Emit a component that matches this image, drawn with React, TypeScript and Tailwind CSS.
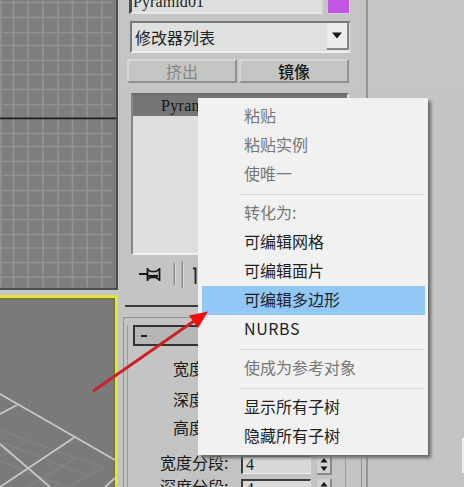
import clsx from 'clsx';

type MenuEntry = { label: string; disabled?: boolean; active?: boolean } | null;

// null draws a separator
const menu: MenuEntry[] = [
  { label: '粘贴', disabled: true },
  { label: '粘贴实例', disabled: true },
  { label: '使唯一', disabled: true },
  null,
  { label: '转化为:', disabled: true },
  { label: '可编辑网格' },
  { label: '可编辑面片' },
  { label: '可编辑多边形', active: true },
  { label: 'NURBS' },
  null,
  { label: '使成为参考对象', disabled: true },
  null,
  { label: '显示所有子树' },
  { label: '隐藏所有子树' },
];

const columns = [1, 13.5, 28, 43, 58, 72.5, 87, 102];
const rows = [2.5, 17.5, 32.5, 45.5, 60.5, 74.5, 89.5, 104.5, 133.5, 146.5, 161.5, 175.5, 190.5, 205.5, 219.5, 234.5, 248, 262.5, 277];

function TopViewport() {
  return (
    <div className="h-[290px] w-[118px] shrink-0 border-r-2 border-b-2 border-[#4b4d56] bg-[#7d7e7e]">
      <svg width="116" height="288" viewBox="0 0 116 288" className="block">
        <g stroke="#929393" strokeWidth="1.7">
          {columns.map((x) => (
            <line key={x} x1={x} x2={x} y1="0" y2="287" />
          ))}
          {rows.map((y) => (
            <line key={y} x1="0" x2="112" y1={y} y2={y} />
          ))}
        </g>
        <line x1="0" x2="116" y1="118.3" y2="118.3" stroke="#1c1c1c" strokeWidth="1.8" />
      </svg>
    </div>
  );
}

function PerspectiveViewport() {
  return (
    <div className="mt-[5px] h-[192px] w-[118px] shrink-0 overflow-hidden border-t-[3px] border-r-[3px] border-[#e4e23e] bg-[#7c797b]">
      <svg width="115" height="189" viewBox="0 298 115 189" fill="none" className="block">
        <path d="M0 298.5H114.3V487" stroke="#777532" strokeWidth="1.4" />
        <g stroke="#868486" strokeWidth="1.3">
          <path d="M0 430 L103 468 L68 487" />
          <path d="M0 442 L86 475" />
          <path d="M29 440 L0 456" />
          <path d="M76 458 L28 487" />
          <path d="M0 461 L66 487" />
        </g>
        <g stroke="#c9c8ca" strokeWidth="1.8">
          <path d="M0 394 L75 437 L115 460" />
          <path d="M75 437 L0 487" />
          <path d="M17 405 L0 414" />
          <path d="M0 444 L50 487" />
          <path d="M115 478 L105 487" />
        </g>
      </svg>
    </div>
  );
}

function PanelButton({ label, disabled }: { label: string; disabled?: boolean }) {
  return (
    <div
      className={clsx(
        'flex h-6 w-[110px] items-center justify-center border-2 border-t-[#d4d6d4] border-r-[#8f9190] border-b-[#8f9190] border-l-[#d4d6d4] text-[16px] leading-none',
        disabled ? 'text-[#858685]' : 'font-medium text-[#171717]',
      )}
    >
      {label}
    </div>
  );
}

function Spinner() {
  return (
    <div className="flex h-[20px] w-[15px] flex-col items-center justify-center border-r-2 border-b-2 border-[#8b8b8b] bg-[#d2d2d2]">
      <svg width="8" height="13" viewBox="0 0 8 13" fill="#151515">
        <path d="M4 0 L7.6 4.4 H0.4Z" />
        <path d="M4 13 L0.4 8.6 H7.6Z" />
      </svg>
    </div>
  );
}

function SegmentRow({ label }: { label: string }) {
  return (
    <div className="flex h-[24px] items-start">
      <span className="w-[81px] text-[16px] leading-[15px] whitespace-nowrap">{label}</span>
      <div className="mr-[6px] h-[19px] w-[70px] border-t-2 border-r border-b border-l-2 border-t-[#3c3c3c] border-r-[#dedede] border-b-[#eeeeee] border-l-[#3c3c3c] bg-[#d8d8d8] pl-[3px] font-['Liberation_Serif',serif] text-[16px] leading-[16px]">
        4
      </div>
      <Spinner />
    </div>
  );
}

function StackToolbar() {
  return (
    <svg width="80" height="32" viewBox="134 260 80 32" fill="none" className="ml-[15px] block">
      <path d="M139 275H147M147.5 269V282M159.5 269V282" stroke="#171717" strokeWidth="1.8" />
      <path d="M148 271L151 272.5H156L159 270.5M148 280L151 278.5H156L159 280.5" stroke="#171717" strokeWidth="1.7" />
      <path d="M148 277H158" stroke="#171717" strokeWidth="2.2" />
      <path d="M174.3 264V286M182.3 262V289" stroke="#8d8d8d" strokeWidth="1.5" />
      <path d="M175.6 264V286M183.6 262V289" stroke="#dadada" />
      <path d="M193 269.5H195.5V285" stroke="#222" strokeWidth="1.8" />
    </svg>
  );
}

function Rollout() {
  return (
    <div className="mt-[10px] ml-1 h-[170px] w-[239px] shrink-0 border-t border-r border-l border-[#929292] pt-[7px]">
      <div className="ml-[3px] flex h-[162px] w-[219px] flex-col border-r border-l border-[#999]">
        <div className="ml-[5px] flex h-[21px] w-[206px] shrink-0 items-center border-2 border-[#333] bg-[#b6b6b6] pl-[6px]">
          <span className="h-[2px] w-[6px] bg-[#222]" />
        </div>
        <div className="ml-[45px] flex flex-col text-[16px] leading-none text-[#181818]">
          <span className="mt-[14px] h-[31px]">宽度:</span>
          <span className="h-[28px]">深度:</span>
          <span className="h-[28px]">高度:</span>
        </div>
        <div className="ml-[32px] pt-[8px] text-[#181818]">
          <SegmentRow label="宽度分段:" />
          <SegmentRow label="深度分段:" />
        </div>
      </div>
    </div>
  );
}

function ModifierPanel() {
  return (
    <div className="flex h-[487px] w-[249px] shrink-0 flex-col border-r-2 border-[#949594]">
      <div className="flex h-[14px] items-end pl-[10px]">
        <div className="mr-[5px] flex h-[14px] w-[194px] items-end border-r-2 border-b-2 border-l-[3px] border-r-[#d6d7d6] border-b-[#e6e7e6] border-l-[#4b4d4c] bg-[#dddfdd] pl-[1px]">
          <span className="mb-[1px] font-['Liberation_Serif',serif] text-[16px] leading-[18px] tracking-[0.1px] text-[#222]">Pyramid01</span>
        </div>
        <div className="h-[14px] w-[22px] border-r border-b border-[#e7c8ec] bg-[#c356e2]" />
      </div>

      <div className="mt-[7px] ml-[11px] flex h-[32px] w-[221px] items-center justify-between border-2 border-t-[#777a79] border-r-[#d2d4d3] border-b-[#eceeed] border-l-[#777a79] bg-[#dfe1e0] pl-[3px]">
        <span className="text-[16px] leading-none text-[#222]">修改器列表</span>
        <div className="flex h-[27px] w-[22px] items-center justify-center border-r-2 border-b-2 border-[#858786] bg-[#ebecec]">
          <svg width="10" height="7" viewBox="0 0 10 7">
            <path d="M0 0.5H10L5 6.5Z" fill="#151515" />
          </svg>
        </div>
      </div>

      <div className="mt-[6px] flex gap-[2px] pl-[8px]">
        <PanelButton label="挤出" disabled />
        <PanelButton label="镜像" />
      </div>

      <div className="mt-[10px] ml-[12px] h-[163px] w-[218px] border-2 border-t-[#6a6c6b] border-r-[#e5e6e5] border-b-[#efefef] border-l-[#858786] bg-[#dee0df]">
        <div className="h-[21px] bg-[#747675] pl-[28px] font-['Liberation_Serif',serif] text-[16px] leading-[22px] tracking-[0.3px] text-[#151515]">
          Pyramid
        </div>
      </div>

      <div className="h-[50px] shrink-0 pt-[4px]">
        <StackToolbar />
      </div>
      <div className="ml-[6px] h-[2px] w-[222px] shrink-0 bg-[#3a3a3a]" />
      <Rollout />
    </div>
  );
}

function ContextMenu() {
  return (
    <div className="absolute top-[98px] left-[198px] h-[357px] w-[230px] bg-[#f1f1f1] px-1 pt-1 shadow-[3px_3px_3px_#6b6b6b]">
      {menu.map((entry, i) =>
        entry ? (
          <div
            key={entry.label}
            className={clsx(
              'h-[29px] w-[223px] pl-[42px] text-[16px] leading-[27px] whitespace-nowrap',
              entry.active && 'bg-[#91c8f6]',
              entry.disabled ? 'text-[#777]' : 'text-[#1f1f1f]',
              entry.label === 'NURBS' && 'tracking-[0.6px]',
            )}
          >
            {entry.label}
          </div>
        ) : (
          <div key={i} className="flex h-[10px] items-center pl-[37px]">
            <div className="h-px w-[185px] bg-[#d6d6d6]" />
          </div>
        ),
      )}
    </div>
  );
}

export default function App() {
  return (
    <div className="relative flex h-[487px] w-[464px] overflow-hidden bg-linear-to-b from-[#c4c6c3] to-[#c3c3c3] font-['Noto_Sans_CJK_SC',sans-serif]">
      <div className="flex w-[119px] shrink-0 flex-col">
        <TopViewport />
        <PerspectiveViewport />
      </div>
      <ModifierPanel />
      <div className="mt-[438px] ml-auto h-[35px] w-[2px] bg-[#eee]" />
      <ContextMenu />
      {/* Pointer towards the highlighted entry */}
      <svg width="116" height="82" viewBox="92 311 116 82" className="absolute top-[311px] left-[92px]">
        <path d="M94 390.5L194 321" stroke="#c92125" strokeWidth="2.8" strokeLinecap="round" />
        <path d="M208 311.5L189 315.5L198 328Z" fill="#f30b10" />
      </svg>
    </div>
  );
}
